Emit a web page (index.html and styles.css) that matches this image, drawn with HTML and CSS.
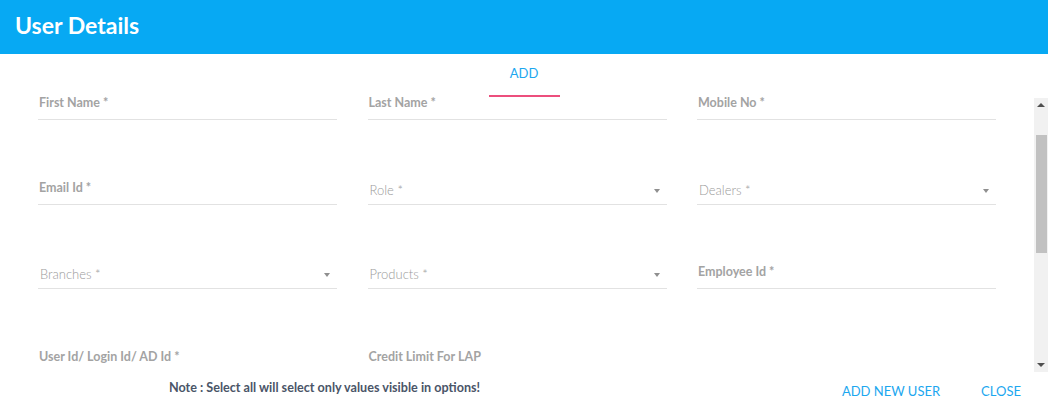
FILE: index.html
```html
<!DOCTYPE html>
<html>
<head>
<meta charset="utf-8">
<link rel="stylesheet" href="styles.css">
</head>
<body>
<div class="dialog">
  <header class="header"><h1 class="title">User Details</h1></header>
  <nav class="tabs"><div class="tab">ADD<span class="ink"></span></div></nav>
  <div class="scroll">
    <div class="scroll-body">
      <div class="grid">
        <div class="field"><span class="label">First Name *</span></div>
        <div class="field"><span class="label">Last Name *</span></div>
        <div class="field"><span class="label">Mobile No *</span></div>

        <div class="field"><span class="label">Email Id *</span></div>
        <div class="field select"><span class="placeholder">Role *</span><span class="caret"></span></div>
        <div class="field select"><span class="placeholder">Dealers *</span><span class="caret"></span></div>

        <div class="field select"><span class="placeholder">Branches *</span><span class="caret"></span></div>
        <div class="field select"><span class="placeholder">Products *</span><span class="caret"></span></div>
        <div class="field"><span class="label">Employee Id *</span></div>

        <div class="field"><span class="label">User Id/ Login Id/ AD Id *</span></div>
        <div class="field"><span class="label">Credit Limit For LAP</span></div>
        <div class="field empty"></div>
      </div>
    </div>
    <div class="scrollbar">
      <div class="sb-btn"><span class="sb-up"></span></div>
      <div class="sb-track"><div class="sb-thumb"></div></div>
      <div class="sb-btn"><span class="sb-down"></span></div>
    </div>
  </div>
  <footer class="footer">
    <p class="note">Note : Select all will select only values visible in options!</p>
    <div class="actions">
      <button class="btn">ADD NEW USER</button>
      <button class="btn">CLOSE</button>
    </div>
  </footer>
</div>
</body>
</html>
```

FILE: styles.css
```css
html, body {
  margin: 0;
  padding: 0;
  background: #ffffff;
}
body {
  font-family: Lato, "Open Sans", Arial, sans-serif;
  width: 1048px;
  height: 414px;
  overflow: hidden;
}
.dialog {
  display: flex;
  flex-direction: column;
  height: 414px;
}
.header {
  height: 54px;
  background: #07a9f3;
  display: flex;
  align-items: center;
  padding-left: 15px;
  box-sizing: border-box;
}
.title {
  margin: 0;
  color: #ffffff;
  font-size: 23px;
  font-weight: 700;
  line-height: 1;
  padding-bottom: 4px;
}
.tabs {
  height: 41px;
  display: flex;
  justify-content: center;
}
.tab {
  position: relative;
  width: 71px;
  height: 41px;
  box-sizing: border-box;
  color: #1ca7ef;
  font-size: 13px;
  text-align: center;
  padding-top: 11px;
}
.ink {
  position: absolute;
  left: 0;
  right: 0;
  bottom: -2px;
  height: 2px;
  background: #ec4f7d;
  z-index: 2;
}
.scroll {
  height: 277px;
  display: flex;
}
.scroll-body {
  flex: 1;
  overflow: hidden;
  padding-left: 38px;
}
.grid {
  display: grid;
  grid-template-columns: 299px 299px 299px;
  column-gap: 30.5px;
  grid-auto-rows: 84.5px;
}
.field {
  height: 25px;
  box-sizing: border-box;
  border-bottom: 1px solid #e2e2e2;
  display: flex;
  align-items: flex-start;
  justify-content: space-between;
}
.field.empty {
  border-bottom: none;
}
.label {
  font-size: 12.5px;
  line-height: 16px;
  font-weight: 700;
  color: #a3a3a3;
  padding-left: 1px;
}
.placeholder {
  font-size: 13px;
  line-height: 17px;
  font-weight: 300;
  color: #9a9a9a;
  padding-left: 2px;
  padding-top: 2px;
}
.caret {
  width: 0;
  height: 0;
  border-left: 3.5px solid transparent;
  border-right: 3.5px solid transparent;
  border-top: 4px solid #8f8f8f;
  margin-top: 9px;
  margin-right: 7px;
}
.scrollbar {
  width: 14px;
  margin-top: 3px;
  background: #f1f1f1;
  display: flex;
  flex-direction: column;
}
.sb-btn {
  height: 14px;
  display: flex;
  align-items: center;
  justify-content: center;
}
.sb-up {
  width: 0;
  height: 0;
  border-left: 4px solid transparent;
  border-right: 4px solid transparent;
  border-bottom: 4px solid #505050;
}
.sb-down {
  width: 0;
  height: 0;
  border-left: 4px solid transparent;
  border-right: 4px solid transparent;
  border-top: 4px solid #505050;
}
.sb-track {
  flex: 1;
  padding: 23px 1px 0 2px;
}
.sb-thumb {
  height: 118px;
  background: #c1c1c1;
}
.footer {
  flex: 1;
  display: flex;
  align-items: flex-start;
}
.note {
  width: 649px;
  margin: 0;
  padding-top: 8px;
  text-align: center;
  font-size: 12.6px;
  font-weight: 700;
  color: #4a5568;
}
.actions {
  margin-left: auto;
  display: flex;
  padding-top: 10px;
  padding-right: 11px;
}
.btn {
  background: none;
  border: none;
  font-family: Lato, "Open Sans", Arial, sans-serif;
  font-size: 13px;
  color: #1ca7ef;
  padding: 0 16px;
  margin-left: 9px;
  line-height: 18px;
}
```
